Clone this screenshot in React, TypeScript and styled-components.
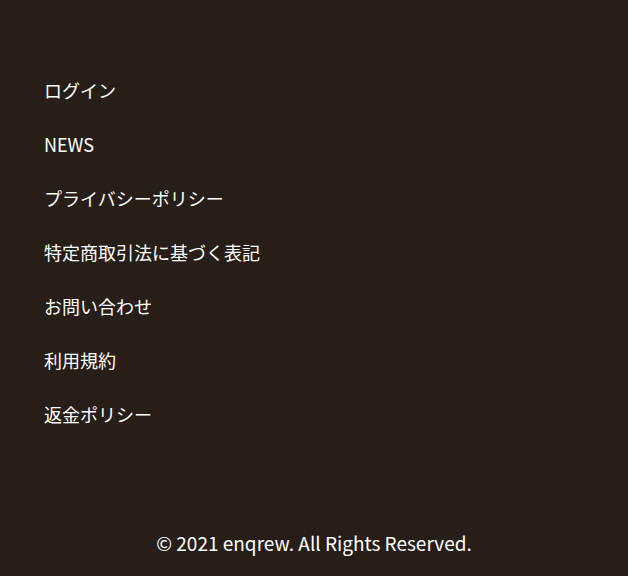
import React from 'react';
import styled, { createGlobalStyle } from 'styled-components';

const GlobalStyle = createGlobalStyle`
  html, body {
    margin: 0;
    padding: 0;
    background: #261e17;
  }
  body {
    font-family: "Noto Sans CJK JP", "Noto Sans", sans-serif;
    color: #ffffff;
  }
`;

const links = [
  'ログイン',
  'NEWS',
  'プライバシーポリシー',
  '特定商取引法に基づく表記',
  'お問い合わせ',
  '利用規約',
  '返金ポリシー',
];

const App = () => {
  return (
    <>
      <GlobalStyle />
      <Page>
        <Nav>
          {links.map((label) => (
            <NavLink key={label} href="#">
              {label}
            </NavLink>
          ))}
        </Nav>
        <Copyright>© 2021 enqrew. All Rights Reserved.</Copyright>
      </Page>
    </>
  );
};

const Page = styled.footer`
  min-height: 100vh;
  box-sizing: border-box;
  display: flex;
  flex-direction: column;
  padding: 77px 44px 19px;
`;

const Nav = styled.nav`
  display: flex;
  flex-direction: column;
  align-items: flex-start;
  gap: 27px;
`;

const NavLink = styled.a`
  font-size: 18px;
  line-height: 27px;
  color: #ffffff;
  text-decoration: none;
`;

const Copyright = styled.p`
  margin: auto 0 0;
  text-align: center;
  font-size: 19px;
  line-height: 28px;
`;

export default App;
